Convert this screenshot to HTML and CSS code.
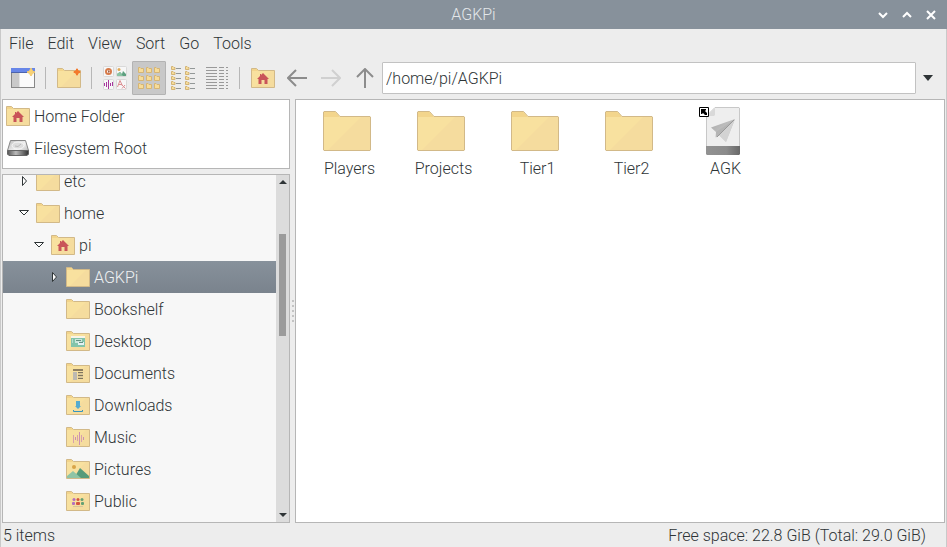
FILE: index.html
```
<!DOCTYPE html>
<html lang="en">
<head>
<meta charset="utf-8">
<title>AGKPi</title>
<link rel="stylesheet" href="styles.css">
</head>
<body>
<svg class="defs" aria-hidden="true">
  <defs>
    <linearGradient id="drive-top" x1="0" y1="0" x2="1" y2="1"><stop offset="0" stop-color="#bbb"/><stop offset=".5" stop-color="#f1f1f1"/><stop offset="1" stop-color="#a5a5a5"/></linearGradient>
    <linearGradient id="drive-front"><stop offset="0" stop-color="#555"/><stop offset=".4" stop-color="#bbb"/><stop offset="1" stop-color="#333"/></linearGradient>
    <linearGradient id="band"><stop offset="0" stop-color="#929292"/><stop offset=".6" stop-color="#8b8b8b"/><stop offset="1" stop-color="#686868"/></linearGradient>
    <linearGradient id="wing" x1="0" y1="0" x2="1" y2="1"><stop offset="0" stop-color="#a8a8a8"/><stop offset="1" stop-color="#d8d8d8"/></linearGradient>
    <symbol id="folder" viewBox="0 0 24 20">
      <path d="M.5 19.500V.5H5.500L7.500 2.500H23.500V19.500Z" fill="#f8e19f"/>
      <path d="M23 3V19H4L20 3Z" fill="#f5dc9e"/>
      <path d="M1 1H5.500L7.500 3H1Z" fill="#f3d58c"/>
      <path d="M.5 19.500V.5H5.500L7.500 2.500H23.500V19.500Z" fill="none" stroke="#d2b988"/>
    </symbol>
    <symbol id="folder-large" viewBox="0 0 48 40">
      <path d="M.5 39V1L1 .5H12.500L17 5.500H47L47.500 6V39L47 39.500H1Z" fill="#f8e19f"/>
      <path d="M38 6H47V39H5Z" fill="#f5dc9e"/>
      <path d="M1 1H12L16.500 6H1Z" fill="#f3d58c"/>
      <path d="M.5 39V1L1 .5H12.500L17 5.500H47L47.500 6V39L47 39.500H1Z" fill="none" stroke="#d2b988"/>
    </symbol>
    <symbol id="folder-home" viewBox="0 0 24 20">
      <use href="#folder" width="24" height="20"/>
      <path d="M12 5L18 11H16.500V16H13.500V12H10.500V16H7.500V11H6L9 8V6H10V7Z" fill="#c95459"/>
    </symbol>
    <symbol id="tiny-folder" viewBox="0 0 6 6"><path d="M.5 5.500V.5H2L3 1.500H5.500V5.500Z" fill="#f7dc98" stroke="#d6b574"/></symbol>
  </defs>
</svg>

<div class="window">
  <header class="titlebar">
    <h1 class="title">AGKPi</h1>
    <div class="controls">
      <button class="control" aria-label="Minimize"><svg width="10" height="10"><path d="M1 3L5 7L9 3"/></svg></button>
      <button class="control" aria-label="Maximize"><svg width="10" height="10"><path d="M1 7L5 3L9 7"/></svg></button>
      <button class="control" aria-label="Close"><svg width="10" height="10"><path d="M1 1L9 9M9 1L1 9"/></svg></button>
    </div>
  </header>

  <nav class="menubar">
    <button>File</button><button>Edit</button><button>View</button><button>Sort</button><button>Go</button><button>Tools</button>
  </nav>

  <div class="toolbar">
    <button class="tool" aria-label="New window"><svg width="24" height="20"><rect x=".5" y=".5" width="23" height="19" fill="#fbfbfb" stroke="#888"/><path d="M1 4H8V19H1Z" fill="#c9c9c9"/><path d="M8.500 4V19" stroke="#e5e5e5"/><path d="M0 0H24V4H0Z" fill="#6786e8"/><path d="M0 4.500H24" stroke="#4c64ad"/><path d="M20 0L21.500 3L24 4L21.500 5.500L20 8L18.500 5.500L16 4L18.500 3Z" fill="#f8d276" stroke="#f5cc70"/></svg></button>
    <span class="separator"></span>
    <button class="tool" aria-label="New folder"><svg width="24" height="20"><use href="#folder" width="24" height="20"/><path d="M20 0L21.500 2.500L24 4L21.500 5.500L20 8L18.500 5.500L16 4L18.500 2.500Z" fill="#f37a2c"/><path d="M20 1V7M17 4H23" stroke="#f37a2c" stroke-width="2"/></svg></button>
    <span class="separator"></span>
    <button class="tool" aria-label="Thumbnails"><svg width="24" height="24">
      <g fill="#f7f7f7" stroke="#d9d9d9"><rect x=".5" y=".5" width="10" height="10" rx="1"/><rect x="13.500" y=".5" width="10" height="10" rx="1"/><rect x=".5" y="13.500" width="10" height="10" rx="1"/><rect x="13.500" y="13.500" width="10" height="10" rx="1"/></g>
      <circle cx="5.500" cy="5.500" r="2.500" fill="#fff" stroke="#d77b4a" stroke-width="2"/><path d="M5 4L7 5.500L5 7Z" fill="#9a5d45"/>
      <circle cx="16" cy="3.500" r="1.500" fill="#dfa956"/><path d="M14 10V8L17 6L19 8L20 5L23 8V10Z" fill="#5da080"/><path d="M14 10V8L17 6L20 10Z" fill="#8bc3a3"/>
      <path d="M1.500 17V20M3.500 16V21M5.500 14V23M7.500 17V20M9.500 16V20" stroke="#a7379e"/>
      <path d="M14.500 21L17 14.500L19.500 20M15 18.500H19M19 19L22.500 22.500M22 19L19 22.500" fill="none" stroke="#dc8e91"/></svg></button>
    <button class="tool active" aria-label="Icons" aria-pressed="true"><svg width="22" height="22">
      <use href="#tiny-folder" x="0" y="0" width="6" height="6"/><use href="#tiny-folder" x="8" y="0" width="6" height="6"/><use href="#tiny-folder" x="16" y="0" width="6" height="6"/>
      <use href="#tiny-folder" x="0" y="8" width="6" height="6"/><use href="#tiny-folder" x="8" y="8" width="6" height="6"/><use href="#tiny-folder" x="16" y="8" width="6" height="6"/>
      <use href="#tiny-folder" x="0" y="16" width="6" height="6"/><use href="#tiny-folder" x="8" y="16" width="6" height="6"/><use href="#tiny-folder" x="16" y="16" width="6" height="6"/></svg></button>
    <button class="tool" aria-label="Compact list"><svg width="24" height="24">
      <g fill="#f7dc98" stroke="#d2b478"><path d="M.5 3.500V.5H2L3 1.500H4V3.500ZM.5 8.500V5.500H2L3 6.500H4V8.500ZM.5 13.500V10.500H2L3 11.500H4V13.500ZM.5 18.500V15.500H2L3 16.500H4V18.500ZM.5 23.500V20.500H2L3 21.500H4V23.500Z"/><path d="M14.500 3.500V.5H16L17 1.500H18V3.500ZM14.500 8.500V5.500H16L17 6.500H18V8.500ZM14.500 13.500V10.500H16L17 11.500H18V13.500ZM14.500 18.500V15.500H16L17 16.500H18V18.500ZM14.500 23.500V20.500H16L17 21.500H18V23.500Z"/></g>
      <path d="M5 2.500H10M5 7.500H10M5 12.500H10M5 17.500H10M5 22.500H10M19 2.500H24M19 7.500H24M19 12.500H24M19 17.500H24M19 22.500H24" stroke="#939898"/></svg></button>
    <button class="tool" aria-label="Detailed list"><svg width="22" height="22">
      <path d="M0 .5H11M0 3.500H11M0 6.500H11M0 9.500H11M0 12.500H11M0 15.500H11M0 18.500H11M0 21.500H11M13 .5H18M13 3.500H18M13 6.500H18M13 9.500H18M13 12.500H18M13 15.500H18M13 18.500H18M13 21.500H18M20 .5H22M20 3.500H22M20 6.500H22M20 9.500H22M20 12.500H22M20 15.500H22M20 18.500H22M20 21.500H22" stroke="#999"/></svg></button>
    <span class="separator"></span>
    <button class="tool" aria-label="Home"><svg width="24" height="20"><use href="#folder-home" width="24" height="20"/></svg></button>
    <button class="tool nav" aria-label="Back"><svg width="20" height="18"><path d="M20 9H1M9 1L1 9L9 17"/></svg></button>
    <button class="tool nav" aria-label="Forward" disabled><svg width="20" height="18"><path d="M0 9H19M11 1L19 9L11 17"/></svg></button>
    <button class="tool nav" aria-label="Up"><svg width="18" height="20"><path d="M9 20V1M1 9L9 1L17 9"/></svg></button>
    <input class="path" type="text" aria-label="Location" value="/home/pi/AGKPi">
    <button class="history" aria-label="Location history"><svg width="10" height="6"><path d="M0 0H10L5 6Z" fill="#2e3436"/></svg></button>
  </div>

  <main class="content">
    <aside class="sidebar">
      <ul class="places panel">
        <li class="row"><svg width="24" height="20"><use href="#folder-home" width="24" height="20"/></svg>Home Folder</li>
        <li class="row"><svg width="24" height="20"><path d="M4.500 2.500H19.500L22.500 12.500V16L21 17.500H3L1.500 16V12.500Z" fill="url(#drive-top)" stroke="#888"/><ellipse cx="12" cy="7.500" rx="6" ry="3.500" fill="#ddd" stroke="#f7f7f7"/><path d="M9 8Q12 10 15 6" fill="none" stroke="#bbb"/><path d="M1.500 12.500H22.500V16L21 17.500H3L1.500 16Z" fill="url(#drive-front)" stroke="#666"/></svg>Filesystem Root</li>
      </ul>
      <div class="tree panel">
        <ul class="nodes">
          <li class="row"><button class="toggle" aria-label="Expand etc"><svg width="10" height="10"><path d="M3.500 .5L7.500 5L3.500 9.500Z"/></svg></button><svg width="24" height="20"><use href="#folder" width="24" height="20"/></svg>etc</li>
          <li class="row"><button class="toggle" aria-label="Collapse home"><svg width="10" height="10"><path d="M.5 2.500L5 7L9.500 2.500Z"/></svg></button><svg width="24" height="20"><use href="#folder" width="24" height="20"/></svg>home</li>
          <li class="row level-2"><button class="toggle" aria-label="Collapse pi"><svg width="10" height="10"><path d="M.5 2.500L5 7L9.500 2.500Z"/></svg></button><svg width="24" height="20"><use href="#folder-home" width="24" height="20"/></svg>pi</li>
          <li class="row level-3 selected"><button class="toggle" aria-label="Expand AGKPi"><svg width="10" height="10"><path d="M3.500 .5L7.500 5L3.500 9.500Z"/></svg></button><svg width="24" height="20"><use href="#folder" width="24" height="20"/></svg>AGKPi</li>
          <li class="row leaf"><svg width="24" height="20"><use href="#folder" width="24" height="20"/></svg>Bookshelf</li>
          <li class="row leaf"><svg width="24" height="20"><use href="#folder" width="24" height="20"/><path d="M5 6H19V16H5Z" fill="#82c4ab"/><path d="M5 5H19V7H5Z" fill="#f8f4e8"/><path d="M6 9H7M6 11H7" stroke="#e5f4ee"/><path d="M9 8H16V12H9Z" fill="#c8e7dc"/><path d="M12 11H18V14H12Z" fill="#e2f1f3"/><path d="M10 9.500H15M13 11.500H17" stroke="#629284"/></svg>Desktop</li>
          <li class="row leaf"><svg width="24" height="20"><use href="#folder" width="24" height="20"/><path d="M7 6H17V8H7Z" fill="#908062"/><path d="M7 9H11V17H7Z" fill="#bdb9b1"/><path d="M12 9.500H17M12 12.500H17M12 15.500H17" stroke="#80755e"/><path d="M12 11H17M12 14H17" stroke="#c4b58f"/></svg>Documents</li>
          <li class="row leaf"><svg width="24" height="20"><use href="#folder" width="24" height="20"/><path d="M10 6H14V11H15L12 14L9 11H10Z" fill="#55abd0"/><path d="M7.500 15V16.500H16.500V15" fill="none" stroke="#3495c0"/></svg>Downloads</li>
          <li class="row leaf"><svg width="24" height="20"><use href="#folder" width="24" height="20"/><path d="M7.500 8V16M11.500 8V14M15.500 8V15" stroke="#d8a0ad"/><path d="M9.500 10V13M13.500 5V18M17.500 10V13" stroke="#ca91b1"/></svg>Music</li>
          <li class="row leaf"><svg width="24" height="20"><use href="#folder" width="24" height="20"/><circle cx="8" cy="8" r="2" fill="#d9a448"/><path d="M8 19L14 9L23 17V19Z" fill="#569b7a"/><path d="M1 19V17L7 12L15 19Z" fill="#8fc4a5"/></svg>Pictures</li>
          <li class="row leaf"><svg width="24" height="20"><use href="#folder" width="24" height="20"/><path d="M7 15.500H17" stroke="#d7c69a"/><g fill="#b26fbe"><circle cx="8" cy="8.500" r="1.500"/><rect x="6" y="11" width="3" height="3" rx="1"/></g><g fill="#d4553f"><circle cx="12" cy="8.500" r="1.500"/><rect x="10" y="11" width="4" height="3" rx="1"/></g><g fill="#65a173"><circle cx="16" cy="8.500" r="1.500"/><rect x="15" y="11" width="3" height="3" rx="1"/></g></svg>Public</li>
        </ul>
        <div class="scrollbar">
          <svg width="8" height="4"><path d="M0 4L4 0L8 4Z"/></svg>
          <div class="track"><div class="thumb"></div></div>
          <svg width="8" height="4"><path d="M0 0H8L4 4Z"/></svg>
        </div>
      </div>
    </aside>
    <div class="splitter"><i></i><i></i><i></i><i></i><i></i></div>
    <ul class="files panel">
      <li class="file"><svg width="48" height="48"><use href="#folder-large" y="4" width="48" height="40"/></svg><span>Players</span></li>
      <li class="file"><svg width="48" height="48"><use href="#folder-large" y="4" width="48" height="40"/></svg><span>Projects</span></li>
      <li class="file"><svg width="48" height="48"><use href="#folder-large" y="4" width="48" height="40"/></svg><span>Tier1</span></li>
      <li class="file"><svg width="48" height="48"><use href="#folder-large" y="4" width="48" height="40"/></svg><span>Tier2</span></li>
      <li class="file"><svg width="48" height="48">
        <path d="M7.500 47V9L16 .5H40L40.500 1V47Z" fill="#eee" stroke="#c8c8c8"/><path d="M8 9L16 1V8L15 9Z" fill="#d9d9d9"/>
        <path d="M7 39H41V47L40 48H8L7 47Z" fill="url(#band)"/>
        <path d="M36 12L12 20.500L17 25L16.500 30.500L20 28L27 35Z" fill="url(#wing)"/><path d="M36 12L17 25L17.500 30.500Z" fill="#b4b4b4"/><path d="M36 12L20 28L27 35Z" fill="#d3d3d3"/><path d="M35 13L18 30" stroke="#999"/>
        <path d="M.5 .5H9.500V9.500H.5Z" fill="#fff" stroke="#000"/><path d="M2 2H7V3L6 4L8 6V8H6L4 6L3 7H2Z"/></svg><span>AGK</span></li>
    </ul>
  </main>

  <footer class="status"><span>5 items</span><span>Free space: 22.8 GiB (Total: 29.0 GiB)</span></footer>
</div>
</body>
</html>
```
FILE: styles.css
```
* { box-sizing: border-box; }
body {
  margin: 0;
  font: 300 16px/20px Roboto, sans-serif;
  color: #2e3436;
  background: #ededed;
}
ul { margin: 0; padding: 0; list-style: none; }
button { margin: 0; padding: 0; border: 0; background: none; font: inherit; color: inherit; }
svg { display: block; flex: none; }
.defs { position: absolute; width: 0; height: 0; }

.window { display: flex; flex-direction: column; height: 100vh; }

.titlebar {
  display: grid;
  grid-template-columns: 1fr auto 1fr;
  align-items: center;
  height: 29px;
  flex: none;
  background: #87919b;
  color: #e4e7ea;
}
.title { grid-column: 2; margin: 0; padding-top: 1px; font: inherit; }
.controls { display: flex; justify-content: flex-end; gap: 14px; padding-right: 11px; }
.control svg { fill: none; stroke: #fff; stroke-width: 2; }

.menubar { display: flex; gap: 14px; padding: 5px 8px 7px; border: solid #c9c9c9; border-width: 0 1px; flex: none; }

.toolbar {
  display: flex;
  align-items: center;
  padding: 0 6px 4px 5px;
  border: solid #c9c9c9;
  border-width: 0 1px;
  flex: none;
}
.tool { display: grid; place-items: center; width: 34px; height: 34px; flex: none; }
.active { background: #c8c8c8; border: 1px solid #b3b3b3; border-radius: 1px; }
.separator { width: 1px; height: 22px; margin: 0 6px 0 5px; background: #b7b7b7; flex: none; }
.nav svg { fill: none; stroke: #8c8c8c; stroke-width: 2; }
.nav:disabled svg { stroke: #d0d0d0; }
.path {
  flex: 1;
  min-width: 0;
  height: 32px;
  padding: 0 3px;
  border: 1px solid #c2c2c2;
  border-radius: 1px;
  background: #fff;
  font: inherit;
  color: inherit;
}
.history { display: grid; place-items: center; width: 24px; height: 32px; }

.content { display: flex; flex: 1; min-height: 0; padding: 0 1px; border: solid #c9c9c9; border-width: 0 1px; }
.panel { border: 1px solid #b6b6b6; background: #fff; }
.sidebar { display: flex; flex-direction: column; gap: 5px; width: 288px; flex: none; }
.row { display: flex; align-items: center; gap: 4px; height: 32px; padding-top: 2px; }
.row > svg, .toggle { margin-bottom: 2px; }
.places { height: 70px; padding-left: 3px; flex: none; }
.tree { display: flex; flex: 1; min-height: 0; overflow: hidden; background: #f7f7f7; }
.nodes { flex: 1; margin-top: -10px; }
.nodes .row { padding-left: 15px; }
.nodes .level-2 { padding-left: 30px; }
.nodes .level-3 { padding-left: 45px; }
.nodes .leaf { padding-left: 63px; }
.nodes .selected { background: linear-gradient(#87919b, #7a838d); color: #f0f2f3; }
.toggle { width: 14px; }
.toggle svg { margin-left: 1px; fill: #fff; stroke: #2e3436; }
.scrollbar {
  display: flex;
  flex-direction: column;
  align-items: center;
  width: 13px;
  padding: 5px 0;
  background: #dcdcdc;
  fill: #2e3436;
}
.track { flex: 1; padding-top: 50px; }
.thumb { width: 7px; height: 102px; background: #9b9b9b; }

.splitter { display: flex; flex-direction: column; align-items: center; justify-content: center; gap: 3px; width: 5px; flex: none; }
.splitter i { width: 2px; height: 2px; background: #c3c3c3; }

.files { display: flex; flex-wrap: wrap; align-content: flex-start; flex: 1; min-width: 0; padding: 7px 4px; }
.file { display: flex; flex-direction: column; align-items: center; gap: 4px; width: 94px; }
.file span { padding-left: 5px; }

.status { display: flex; justify-content: space-between; height: 24px; padding: 3px 20px 1px 2px; border: solid #c9c9c9; border-width: 0 1px; flex: none; }
```
